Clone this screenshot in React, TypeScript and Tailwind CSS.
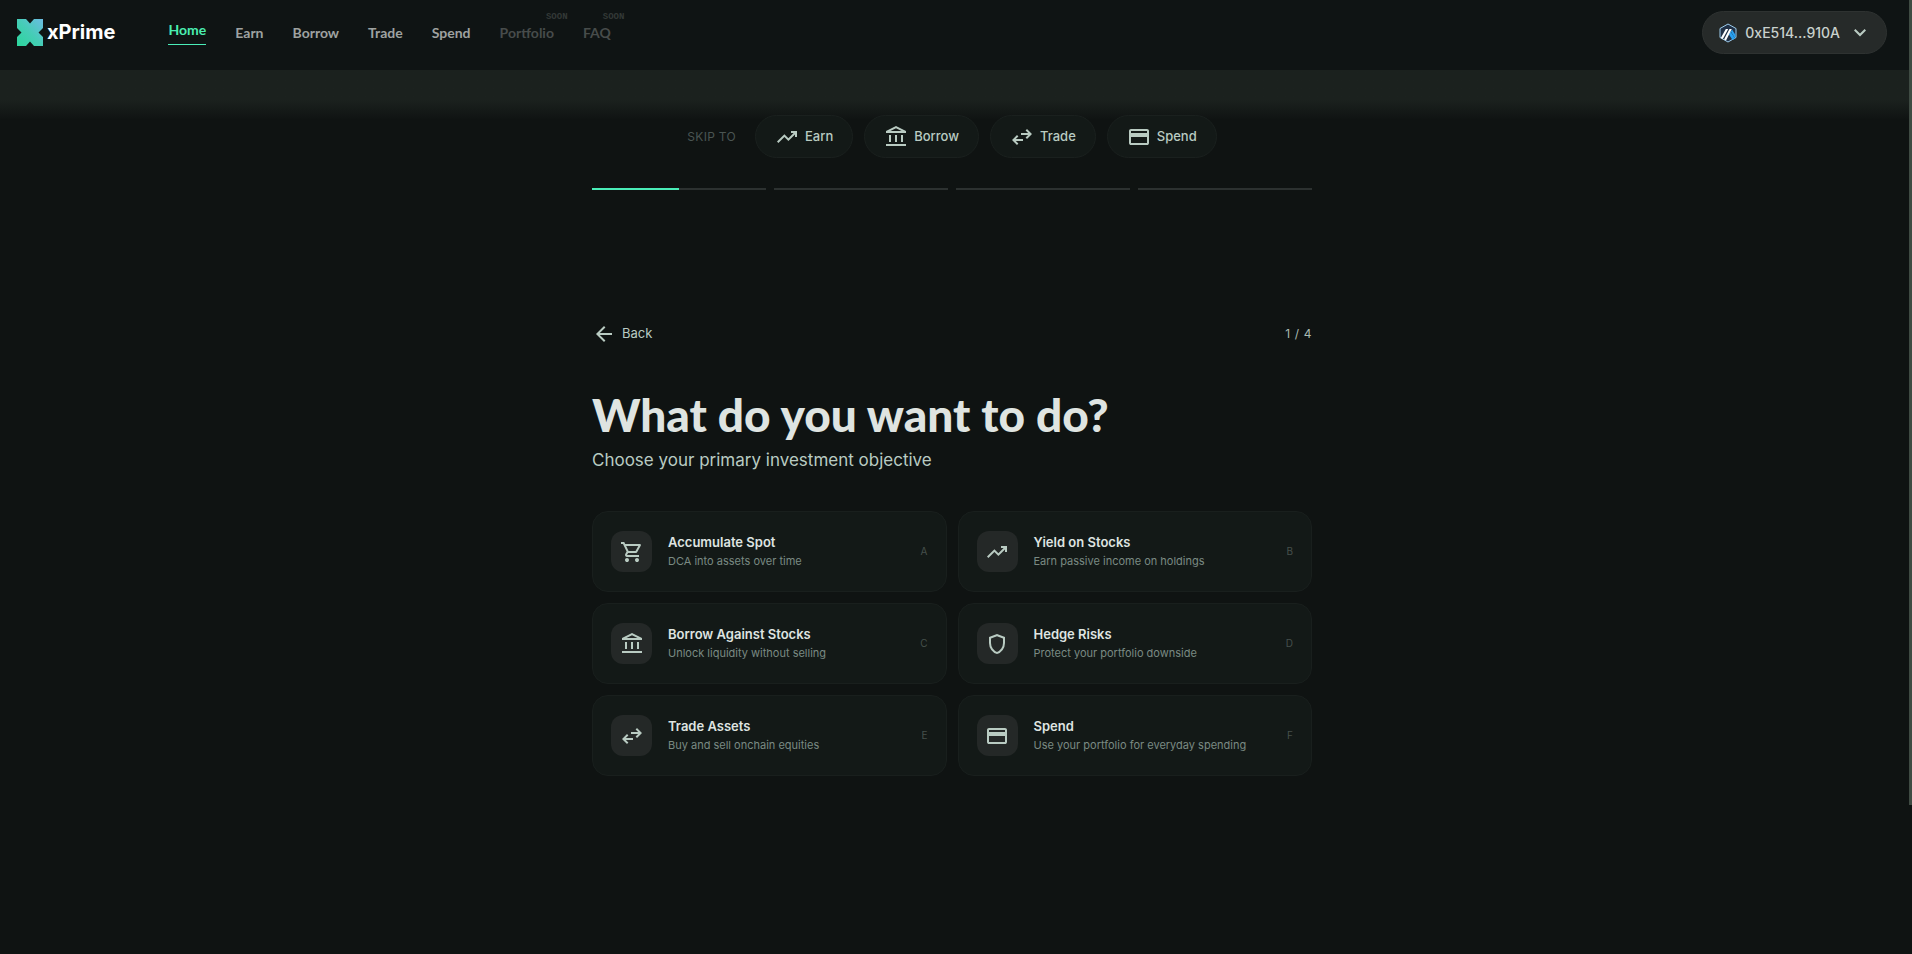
import React from "react";
import clsx from "clsx";

interface IconProps {
  path: string;
  className?: string;
}

interface NavItem {
  label: string;
  active?: boolean;
  soon?: boolean;
}

interface Shortcut {
  label: string;
  icon: string;
}

interface Objective {
  hotkey: string;
  title: string;
  description: string;
  icon: string;
}

const ICONS = {
  trendingUp:
    "m136-240-56-56 296-298 160 160 208-206H640v-80h240v240h-80v-104L536-320 376-480 136-240Z",
  bank: "M200-280v-280h80v280h-80Zm240 0v-280h80v280h-80Zm240 0v-280h80v280h-80ZM80-120v-80h800v80H80Zm0-520v-80l400-200 400 200v80H80Zm178-80h444L480-830 258-720Z",
  swap: "M280-160 80-360l200-200 56 57-103 103h287v80H233l103 103-56 57Zm400-240-56-57 103-103H440v-80h287L624-743l56-57 200 200-200 200Z",
  card: "M880-720v480q0 33-23.5 56.5T800-160H160q-33 0-56.5-23.5T80-240v-480q0-33 23.5-56.5T160-800h640q33 0 56.5 23.5T880-720Zm-720 80h640v-80H160v80Zm0 160v240h640v-240H160Z",
  cart: "M280-80q-33 0-56.5-23.5T200-160q0-33 23.5-56.5T280-240q33 0 56.5 23.5T360-160q0 33-23.5 56.5T280-80Zm400 0q-33 0-56.5-23.5T600-160q0-33 23.5-56.5T680-240q33 0 56.5 23.5T760-160q0 33-23.5 56.5T680-80ZM246-720l96 200h280l110-200H246Zm-38-80h590q23 0 35 20.5t1 41.5L692-482q-11 20-29.5 31T622-440H324l-44 80h480v80H280q-45 0-68-39.5t-2-78.5l54-98-144-304H40v-80h130l38 80Z",
  shield:
    "M480-80q-139-35-229.5-159.5T160-516v-244l320-120 320 120v244q0 152-90.5 276.5T480-80Zm0-84q104-33 172-132t68-220v-189l-240-90-240 90v189q0 121 68 220t172 132Z",
  back: "m313-440 224 224-57 56-320-320 320-320 57 56-224 224h487v80H313Z",
  chevronDown: "M480-344 240-584l56-56 184 184 184-184 56 56-240 240Z",
};

const navItems: NavItem[] = [
  { label: "Home", active: true },
  { label: "Earn" },
  { label: "Borrow" },
  { label: "Trade" },
  { label: "Spend" },
  { label: "Portfolio", soon: true },
  { label: "FAQ", soon: true },
];

const shortcuts: Shortcut[] = [
  { label: "Earn", icon: ICONS.trendingUp },
  { label: "Borrow", icon: ICONS.bank },
  { label: "Trade", icon: ICONS.swap },
  { label: "Spend", icon: ICONS.card },
];

const objectives: Objective[] = [
  {
    hotkey: "A",
    title: "Accumulate Spot",
    description: "DCA into assets over time",
    icon: ICONS.cart,
  },
  {
    hotkey: "B",
    title: "Yield on Stocks",
    description: "Earn passive income on holdings",
    icon: ICONS.trendingUp,
  },
  {
    hotkey: "C",
    title: "Borrow Against Stocks",
    description: "Unlock liquidity without selling",
    icon: ICONS.bank,
  },
  {
    hotkey: "D",
    title: "Hedge Risks",
    description: "Protect your portfolio downside",
    icon: ICONS.shield,
  },
  {
    hotkey: "E",
    title: "Trade Assets",
    description: "Buy and sell onchain equities",
    icon: ICONS.swap,
  },
  {
    hotkey: "F",
    title: "Spend",
    description: "Use your portfolio for everyday spending",
    icon: ICONS.card,
  },
];

// Share of each step that is done, in percent
const steps = [50, 0, 0, 0];

const Icon: React.FC<IconProps> = ({ path, className }) => (
  <svg
    viewBox="0 -960 960 960"
    fill="currentColor"
    aria-hidden="true"
    className={clsx("size-6 shrink-0", className)}
  >
    <path d={path} />
  </svg>
);

const Logo: React.FC = () => (
  <a href="#home" className="flex items-center gap-1">
    <svg viewBox="0 0 26 27" aria-hidden="true" className="h-[27px] w-[26px]">
      <defs>
        <linearGradient id="logo-fill" x1="0" y1="1" x2="1" y2="0">
          <stop offset="0" stopColor="#2bd69b" />
          <stop offset="0.5" stopColor="#45cdb6" />
          <stop offset="1" stopColor="#6cbce4" />
        </linearGradient>
      </defs>
      <path
        fill="url(#logo-fill)"
        d="M0 0h9l4 4.5L17 0h9v9l-4.500 4.500L26 18v9h-9l-4-4.500L9 27H0v-9l4.500-4.500L0 9Z"
      />
    </svg>
    <span className="pb-0.5 text-xl font-bold text-white">xPrime</span>
  </a>
);

const NetworkIcon: React.FC = () => (
  <svg viewBox="0 0 18 20" aria-hidden="true" className="h-5 w-[18px]">
    <path
      d="M9 1l8 4.500v9L9 19l-8-4.500v-9Z"
      fill="#213147"
      stroke="#9dcced"
      strokeWidth="1"
    />
    <path d="M11.500 8.500 10 11.500l3.500 5.500 2.500-1.500Z" fill="#28a0f0" />
    <path d="M13 6.500 11.900 8.600 15.500 14.800 16.500 14V12Z" fill="#28a0f0" />
    <path d="M6.800 6h2.400L3.800 16 1.800 14.900ZM10.500 6h2.300L7 17.600 5 16.600Z" fill="#fff" />
  </svg>
);

const Header: React.FC = () => {
  const renderNavItem = ({ label, active, soon }: NavItem) => {
    if (soon) {
      return (
        <span key={label} className="relative text-[#474c4b]">
          {label}
          <span className="absolute -top-3 left-full -ml-2 font-['Liberation_Mono',monospace] text-[9px] leading-3 font-bold text-[#333937]">
            SOON
          </span>
        </span>
      );
    }
    return (
      <a
        key={label}
        href={`#${label.toLowerCase()}`}
        className={clsx(
          active
            ? "border-b border-[#4aedb8] pb-1 text-[#4aedb0]"
            : "text-[#9fa2a1]"
        )}
      >
        {label}
      </a>
    );
  };

  return (
    <header className="relative flex h-[70px] items-start justify-between bg-[#0f1414] pt-[11px] pr-[25px] pl-[17px]">
      <div className="flex h-[43px] items-center gap-[53px]">
        <Logo />
        <nav className="flex items-center gap-[29px] font-['Lato',sans-serif] text-[14px] leading-5 font-bold">
          {navItems.map(renderNavItem)}
        </nav>
      </div>
      <button
        type="button"
        className="flex h-[43px] items-center rounded-full border border-[#2e3231] bg-[#262a29] pr-3.5 pl-4 text-[14px] font-medium text-[#c9d1cd]"
      >
        <NetworkIcon />
        <span className="mx-2">0xE514...910A</span>
        <Icon path={ICONS.chevronDown} className="text-[#b9cbc2]" />
      </button>
      <div className="absolute inset-x-0 top-full h-[50px] bg-linear-to-b from-[#1b211e] from-60% to-transparent" />
    </header>
  );
};

const SkipTo: React.FC = () => (
  <div className="relative mt-[45px] flex items-center justify-center gap-[11px]">
    <span className="mr-2 text-xs tracking-wide text-[#4a5552]">SKIP TO</span>
    {shortcuts.map(({ label, icon }) => (
      <button
        key={label}
        type="button"
        className="flex h-[43px] items-center gap-1.5 rounded-full border border-[#1a201e] bg-[#131917] px-[19px] text-[13px] font-medium text-[#b9cbc2]"
      >
        <Icon path={icon} />
        {label}
      </button>
    ))}
  </div>
);

const ProgressBar: React.FC = () => (
  <div className="mt-[30px] flex gap-2">
    {steps.map((done, index) => (
      <div key={index} className="h-0.5 flex-1 bg-[#2c3130]">
        <div className="h-full bg-[#4aedb8]" style={{ width: `${done}%` }} />
      </div>
    ))}
  </div>
);

const ObjectiveCard: React.FC<Objective> = ({
  hotkey,
  title,
  description,
  icon,
}) => (
  <button
    type="button"
    className="flex h-[81px] items-center gap-4 rounded-2xl border border-[#191f1d] bg-[#131917] px-[18px] text-left"
  >
    <span className="flex size-[41px] shrink-0 items-center justify-center rounded-xl bg-[#242827] text-[#b9cbc2]">
      <Icon path={icon} />
    </span>
    <span className="flex flex-1 flex-col pb-0.5">
      <span className="text-[13px] leading-5 font-semibold text-[#dfe4e1]">
        {title}
      </span>
      <span className="text-[11px] leading-[18px] text-[#7a8a83]">
        {description}
      </span>
    </span>
    <span className="text-[10px] text-[#46504c]">{hotkey}</span>
  </button>
);

const App: React.FC = () => (
  <div className="relative min-h-screen bg-[#0f1312] font-['Inter',sans-serif]">
    <Header />
    <main className="mx-auto w-full max-w-[728px] pr-2">
      <SkipTo />
      <ProgressBar />
      <div className="mt-[132px] flex items-center justify-between">
        <button
          type="button"
          className="flex items-center gap-1.5 text-[13px] text-[#b9cbc2]"
        >
          <Icon path={ICONS.back} />
          Back
        </button>
        <span className="text-[12px] tracking-wider text-[#a9bbb2]">
          1 / 4
        </span>
      </div>
      <h1 className="mt-[39px] mb-px font-['Lato',sans-serif] text-[46px] leading-[60px] font-black text-[#dfe4e1]">
        What do you want to do?
      </h1>
      <p className="text-[17px] leading-7 text-[#b9cbc2]">
        Choose your primary investment objective
      </p>
      <div className="mt-[37px] grid grid-cols-2 gap-[11px]">
        {objectives.map((objective) => (
          <ObjectiveCard key={objective.hotkey} {...objective} />
        ))}
      </div>
    </main>
    <div className="absolute top-0 right-0 h-[805px] w-[3px] bg-[#3f4b43]" />
  </div>
);

export default App;
